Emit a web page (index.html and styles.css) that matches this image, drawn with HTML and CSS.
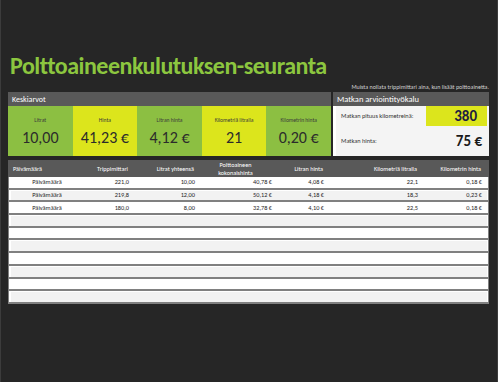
FILE: index.html
```html
<!DOCTYPE html>
<html lang="fi">
<head>
<meta charset="utf-8">
<title>Polttoaineenkulutuksen-seuranta</title>
<link rel="stylesheet" href="styles.css">
</head>
<body>
<div class="page">
  <h1 class="title">Polttoaineenkulutuksen-seuranta</h1>
  <p class="note">Muista nollata trippimittari aina, kun lisäät polttoainetta.</p>
  <div class="top">
    <section class="panel averages">
      <div class="panel-head">Keskiarvot</div>
      <div class="tiles">
        <div class="tile green"><div class="tile-label">Litrat</div><div class="tile-value">10,00</div></div>
        <div class="tile yellow"><div class="tile-label">Hinta</div><div class="tile-value">41,23 €</div></div>
        <div class="tile green"><div class="tile-label">Litran hinta</div><div class="tile-value">4,12 €</div></div>
        <div class="tile yellow"><div class="tile-label">Kilometriä litralla</div><div class="tile-value">21</div></div>
        <div class="tile green"><div class="tile-label">Kilometrin hinta</div><div class="tile-value">0,20 €</div></div>
      </div>
    </section>
    <section class="panel estimator">
      <div class="panel-head big">Matkan arviointityökalu</div>
      <div class="est-body">
        <div class="est-row first">
          <span class="est-label">Matkan pituus kilometreinä:</span>
          <span class="est-input">380</span>
        </div>
        <div class="est-row second">
          <span class="est-label">Matkan hinta:</span>
          <span class="est-result">75 €</span>
        </div>
      </div>
    </section>
  </div>
  <div class="log">
    <div class="row head">
      <div class="c c1">Päivämäärä</div>
      <div class="c c2">Trippimittari</div>
      <div class="c c3">Litrat yhteensä</div>
      <div class="c c4 center">Polttoaineen<br>kokonaishinta</div>
      <div class="c c5">Litran hinta</div>
      <div class="c c6">Kilometriä litralla</div>
      <div class="c c7">Kilometrin hinta</div>
    </div>
    <div class="row odd">
      <div class="c c1 center">Päivämäärä</div><div class="c">221,0</div><div class="c">10,00</div><div class="c">40,78 €</div><div class="c">4,08 €</div><div class="c">22,1</div><div class="c">0,18 €</div>
    </div>
    <div class="row even">
      <div class="c c1 center">Päivämäärä</div><div class="c">219,8</div><div class="c">12,00</div><div class="c">50,12 €</div><div class="c">4,18 €</div><div class="c">18,3</div><div class="c">0,23 €</div>
    </div>
    <div class="row odd">
      <div class="c c1 center">Päivämäärä</div><div class="c">180,0</div><div class="c">8,00</div><div class="c">32,78 €</div><div class="c">4,10 €</div><div class="c">22,5</div><div class="c">0,18 €</div>
    </div>
    <div class="row even"></div>
    <div class="row odd"></div>
    <div class="row even"></div>
    <div class="row odd"></div>
    <div class="row even"></div>
    <div class="row odd"></div>
    <div class="row even"></div>
  </div>
</div>
</body>
</html>
```

FILE: styles.css
```css
* { box-sizing: border-box; }
html, body { margin: 0; padding: 0; }
body {
  background: #262626;
  width: 498px;
  height: 382px;
  overflow: hidden;
  font-family: Carlito, Lato, "Open Sans", sans-serif;
  color: #262626;
}
.page {
  height: 382px;
  padding: 0 8px 0 7px;
  border-left: 1px solid #3c3c3c;
  border-right: 1px solid #3c3c3c;
}
.title {
  margin: 0;
  padding: 51px 0 0 2px;
  height: 82px;
  font-size: 24px;
  line-height: 29px;
  font-weight: 700;
  letter-spacing: -0.5px;
  color: #8cc63f;
  white-space: nowrap;
}
.note {
  margin: 0;
  height: 10px;
  font-size: 6px;
  line-height: 10px;
  text-align: right;
  color: #d0d0d0;
}
.top {
  display: flex;
  gap: 2px;
  height: 64px;
}
.panel { display: flex; flex-direction: column; }
.averages { width: 323px; }
.estimator { width: 156px; }
.panel-head {
  height: 14px;
  background: #595959;
  color: #fff;
  font-size: 8px;
  line-height: 14px;
  padding-left: 4px;
}
.panel-head.big { font-size: 8.5px; }
.tiles {
  flex: 1;
  display: grid;
  grid-template-columns: repeat(5, 1fr);
}
.tile {
  display: flex;
  flex-direction: column;
  align-items: center;
  padding-top: 11px;
}
.green { background: #8cbf42; }
.yellow { background: #dce51c; }
.tile-label {
  font-size: 5.6px;
  line-height: 8px;
  color: #3a3a3a;
}
.tile-value {
  font-size: 16px;
  line-height: 20px;
  margin-top: 3px;
  color: #2b2b2b;
}
.est-body {
  flex: 1;
  background: #f4f4f4;
  border-left: 3px solid #fff;
  display: flex;
  flex-direction: column;
}
.est-row {
  display: flex;
  align-items: center;
  justify-content: space-between;
}
.est-row.first { height: 20px; }
.est-row.second { flex: 1; }
.est-label {
  font-size: 6.3px;
  color: #333;
  padding-left: 5px;
}
.est-input {
  align-self: stretch;
  width: 61px;
  background: #dce51c;
  font-size: 15px;
  font-weight: 700;
  color: #1f2040;
  text-align: right;
  padding-right: 10px;
  line-height: 20px;
  margin-right: 2px;
}
.est-result {
  font-size: 15px;
  font-weight: 700;
  color: #1a1a1a;
  padding-right: 7px;
}
.log {
  margin-top: 4px;
  width: 481px;
}
.row {
  display: grid;
  grid-template-columns: 76px 47px 66px 77px 52px 94px 69px;
  height: 12.7px;
  border-left: 1px solid #808080;
  border-right: 1px solid #808080;
  border-bottom: 2px solid #808080;
  font-size: 6.3px;
  color: #262626;
}
.row.head {
  height: 17px;
  background: #595959;
  color: #fff;
  border: none;
  font-size: 6.2px;
}
.row.odd { background: #fff; }
.row.even { background: #f2f2f2; box-shadow: inset 2px 1px 0 #fff, inset -1px 0 0 #fff; }
.c {
  display: flex;
  align-items: center;
  justify-content: flex-end;
  padding-right: 3px;
  line-height: 8px;
  white-space: nowrap;
}
.c.c1 { justify-content: flex-start; padding-left: 5px; }
.row:not(.head) .c.c1 { justify-content: center; padding: 0; }
.c:last-child { padding-right: 8px; }
.c.center { justify-content: center; text-align: center; padding-right: 0; }
```
